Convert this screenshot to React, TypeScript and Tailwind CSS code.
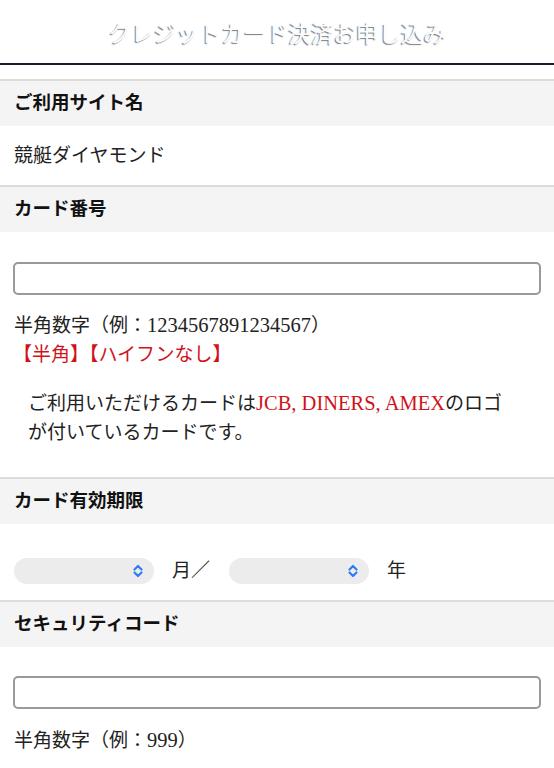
const font = { fontFamily: '"Liberation Serif", "Noto Sans CJK JP", serif' };

function Band({ title }: { title: string }) {
  return (
    <div className="h-[47px] border-t-2 border-[#dcdcdc] bg-[#f4f4f4] pl-[14px] flex items-center font-bold text-[18.5px] text-[#111]">
      {title}
    </div>
  );
}

function Chevrons() {
  return (
    <svg width="12" height="14" viewBox="0 0 12 14" fill="none" stroke="#2f7cf6" strokeWidth="2.2" strokeLinecap="round" strokeLinejoin="round">
      <path d="M2.5 5.5 L6 2 L9.5 5.5" />
      <path d="M2.5 8.5 L6 12 L9.5 8.5" />
    </svg>
  );
}

function FakeSelect() {
  return (
    <div className="w-[140px] h-[26px] rounded-full bg-[#ececec] flex items-center justify-end pr-[10px]">
      <Chevrons />
    </div>
  );
}

function Latin({ children }: { children: React.ReactNode }) {
  return <span className="text-[20.5px]">{children}</span>;
}

export default function App() {
  return (
    <div className="min-h-[768px] bg-white text-[#222] text-[19px] leading-[29px]" style={font}>
      <header className="h-[65px] border-b-2 border-[#1b1b2b] flex items-center justify-center pt-[5px]">
        <h1 className="text-[22.5px] text-[#fdfdfd] [text-shadow:-1px_1px_1px_#7a7a7a]">
          クレジットカード決済お申し込み
        </h1>
      </header>
      <div className="h-[14px]" />

      <Band title="ご利用サイト名" />
      <div className="h-[59px] pl-[14px] flex items-center">競艇ダイヤモンド</div>

      <Band title="カード番号" />
      <div className="px-[13px] pt-[30px] pb-[30px]">
        <input type="text" className="block w-full h-[33px] rounded-[5px] border-2 border-[#999] bg-white" />
        <p className="mt-[16px] pl-px">
          半角数字（例：<Latin>1234567891234567</Latin>）
        </p>
        <p className="text-[#d0121b]">【半角】【ハイフンなし】</p>
        <p className="mt-[20px] pl-[15px]">
          ご利用いただけるカードは
          <span className="text-[#d0121b]">
            <Latin>JCB, DINERS, AMEX</Latin>
          </span>
          のロゴ
          <br />
          が付いているカードです。
        </p>
      </div>

      <Band title="カード有効期限" />
      <div className="pl-[14px] pt-[32px] pb-[15px] flex items-center">
        <FakeSelect />
        <span className="ml-[18px]">月／</span>
        <div className="ml-[19px]">
          <FakeSelect />
        </div>
        <span className="ml-[18px]">年</span>
      </div>

      <Band title="セキュリティコード" />
      <div className="px-[13px] pt-[29px] pb-[20px]">
        <input type="text" className="block w-full h-[33px] rounded-[5px] border-2 border-[#999] bg-white" />
        <p className="mt-[17px] pl-px">
          半角数字（例：<Latin>999</Latin>）
        </p>
      </div>
    </div>
  );
}
